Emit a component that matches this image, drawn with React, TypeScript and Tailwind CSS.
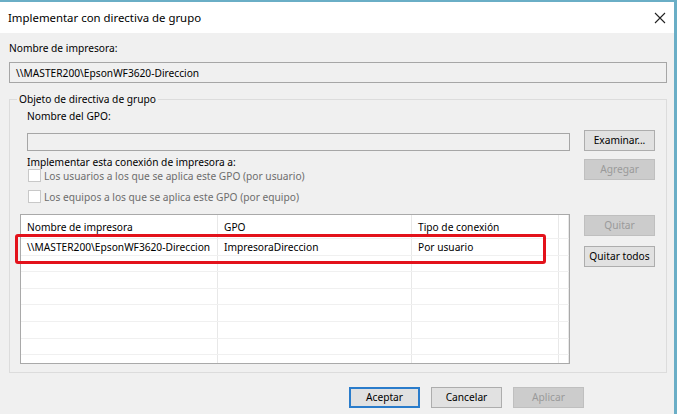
import type { ReactNode } from 'react';

function Btn({
  children,
  disabled,
  primary,
  className = '',
}: {
  children: ReactNode;
  disabled?: boolean;
  primary?: boolean;
  className?: string;
}) {
  const look = disabled
    ? 'border border-[#bfbfbf] bg-[#cccccc] text-[#9a9a9a]'
    : primary
      ? 'border-2 border-[#2a7ccb] bg-[#e1e1e1] text-black'
      : 'border border-[#adadad] bg-[#e1e1e1] text-black';
  return (
    <div
      className={`flex h-[21px] w-[71px] items-center justify-center leading-none whitespace-nowrap ${look} ${className}`}
    >
      {children}
    </div>
  );
}

function Check({ label }: { label: string }) {
  return (
    <div className="flex h-[13px] items-center gap-[3px]">
      <div className="h-[13px] w-[13px] border border-[#c8c8c8] bg-white" />
      <span className="text-[#6d6d6d]">{label}</span>
    </div>
  );
}

const COLS = ['w-[197px]', 'w-[194px]', 'w-[147px]', 'flex-1'];
const HEAD = ['Nombre de impresora', 'GPO', 'Tipo de conexión', ''];
const ROW = ['\\\\MASTER200\\EpsonWF3620-Direccion', 'ImpresoraDireccion', 'Por usuario', ''];

function Row({ cells, head }: { cells: string[]; head?: boolean }) {
  return (
    <div className={`flex shrink-0 border-b border-[#f0f0f0] ${head ? 'h-[24px]' : 'h-[16.6px]'}`}>
      {cells.map((c, i) => (
        <div
          key={i}
          className={`${COLS[i]} flex items-center border-r border-[#e8e8e8] pl-[6px] whitespace-nowrap`}
        >
          {c}
        </div>
      ))}
    </div>
  );
}

export default function App() {
  return (
    <div className="flex h-[414px] w-[677px] flex-col overflow-hidden border-t-2 border-r-[3px] border-[#6aaec6] bg-[#f0f0f0] font-['Noto_Sans',sans-serif] text-[10.2px] leading-[14px] text-black">
      {/* title bar */}
      <div className="flex h-[31px] shrink-0 items-center justify-between bg-white pr-[7px] pl-[8px]">
        <span className="text-[11.4px]">Implementar con directiva de grupo</span>
        <svg width="12" height="12" viewBox="0 0 12 12" className="mr-[1px]">
          <path d="M1 1L11 11M11 1L1 11" stroke="#222" strokeWidth="1.1" />
        </svg>
      </div>

      <div className="flex flex-col px-[9px]">
        <div className="mt-[8px]">Nombre de impresora:</div>
        <div className="mt-[7px] flex h-[21px] w-[658px] items-center border border-[#a6a6a6] bg-[#f0f0f0] pl-[6px]">
          \\MASTER200\EpsonWF3620-Direccion
        </div>

        {/* group box */}
        <div className="relative mt-[16px] flex h-[274px] w-[658px] gap-[14px] border border-[#dcdcdc] pt-[9px] pl-[10px]">
          <span className="absolute -top-[8px] left-[7px] bg-[#f0f0f0] px-[2px]">
            Objeto de directiva de grupo
          </span>

          <div className="flex w-[550px] flex-col">
            <div className="pl-[7px]">
              <div>Nombre del GPO:</div>
              <div className="mt-[10px] h-[18px] w-[543px] border border-[#a6a6a6] bg-[#f0f0f0]" />
              <div className="mt-[5px] h-[13px] leading-[13px]">
                Implementar esta conexión de impresora a:
              </div>
              <div className="flex flex-col gap-[8px] pl-[1px]">
                <Check label="Los usuarios a los que se aplica este GPO (por usuario)" />
                <Check label="Los equipos a los que se aplica este GPO (por equipo)" />
              </div>
            </div>

            <div className="relative mt-[11px]">
              <div className="flex h-[150px] flex-col overflow-hidden border border-[#a9a9a9] bg-white">
                <Row cells={HEAD} head />
                <Row cells={ROW} />
                {Array.from({ length: 7 }).map((_, i) => (
                  <Row key={i} cells={['', '', '', '']} />
                ))}
              </div>
              <div className="absolute top-[20px] -left-[5px] h-[30px] w-[531px] rounded-[3px] border-[3px] border-[#e3121b]" />
            </div>
          </div>

          <div className="flex flex-col pt-[21px]">
            <Btn>Examinar...</Btn>
            <Btn disabled className="mt-[8px]">
              Agregar
            </Btn>
            <Btn disabled className="mt-[35px] h-[20px]">
              Quitar
            </Btn>
            <Btn className="mt-[10px] h-[20px]">Quitar todos</Btn>
          </div>
        </div>

        {/* footer */}
        <div className="mt-[14px] flex gap-[11px] pl-[340px]">
          <Btn primary>Aceptar</Btn>
          <Btn>Cancelar</Btn>
          <Btn disabled>Aplicar</Btn>
        </div>
      </div>
    </div>
  );
}
